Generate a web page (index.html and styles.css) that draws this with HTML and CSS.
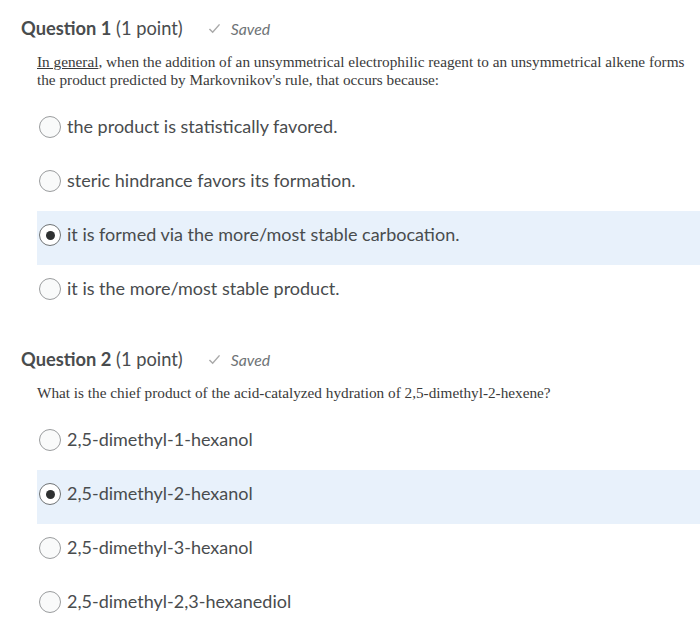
FILE: index.html
```html
<!DOCTYPE html>
<html>
<head>
<meta charset="utf-8">
<link rel="stylesheet" href="styles.css">
</head>
<body>
<div class="page">
  <section class="question q1">
    <div class="qhead">
      <span class="qtitle"><b>Question 1</b> (1 point)</span>
      <span class="saved"><svg class="check" viewBox="0 0 14 12" width="13" height="11"><path d="M1.5 6.5 L5 10 L12.5 1.5" fill="none" stroke="#a9a9a9" stroke-width="1.6"/></svg><i>Saved</i></span>
    </div>
    <p class="prompt"><span class="ul">In general</span>, when the addition of an unsymmetrical electrophilic reagent to an unsymmetrical alkene forms the product predicted by Markovnikov's rule, that occurs because:</p>
    <div class="options">
      <div class="opt"><span class="radio"></span><span class="label">the product is statistically favored.</span></div>
      <div class="opt"><span class="radio"></span><span class="label">steric hindrance favors its formation.</span></div>
      <div class="opt selected"><span class="radio"></span><span class="label">it is formed via the more/most stable carbocation.</span></div>
      <div class="opt"><span class="radio"></span><span class="label">it is the more/most stable product.</span></div>
    </div>
  </section>
  <section class="question q2">
    <div class="qhead">
      <span class="qtitle"><b>Question 2</b> (1 point)</span>
      <span class="saved"><svg class="check" viewBox="0 0 14 12" width="13" height="11"><path d="M1.5 6.5 L5 10 L12.5 1.5" fill="none" stroke="#a9a9a9" stroke-width="1.6"/></svg><i>Saved</i></span>
    </div>
    <p class="prompt">What is the chief product of the acid-catalyzed hydration of 2,5-dimethyl-2-hexene?</p>
    <div class="options">
      <div class="opt"><span class="radio"></span><span class="label">2,5-dimethyl-1-hexanol</span></div>
      <div class="opt selected"><span class="radio"></span><span class="label">2,5-dimethyl-2-hexanol</span></div>
      <div class="opt"><span class="radio"></span><span class="label">2,5-dimethyl-3-hexanol</span></div>
      <div class="opt"><span class="radio"></span><span class="label">2,5-dimethyl-2,3-hexanediol</span></div>
    </div>
  </section>
</div>
</body>
</html>
```

FILE: styles.css
```css
html, body {
  margin: 0;
  padding: 0;
  background: #ffffff;
}
.page {
  font-family: Lato, "Liberation Sans", sans-serif;
  color: #494c4e;
}
.question {
  display: flex;
  flex-direction: column;
}
.q1 {
  padding-top: 16px;
}
.q2 {
  padding-top: 28px;
}
.qhead {
  height: 24px;
  display: flex;
  align-items: center;
  padding-left: 21px;
  gap: 25px;
}
.qtitle {
  font-size: 18.3px;
  color: #494c4e;
}
.qtitle b {
  font-weight: 700;
}
.saved {
  display: flex;
  align-items: center;
  gap: 10px;
  font-size: 15.8px;
  color: #6e7376;
}
.check {
  display: block;
}
.prompt {
  margin: 13px 0 14px 0;
  padding-left: 37px;
  padding-right: 10px;
  font-family: "Liberation Serif", "Times New Roman", serif;
  font-size: 15.25px;
  line-height: 18px;
  color: #3a3a3a;
}
.ul {
  text-decoration: underline;
  text-decoration-thickness: 1px;
}
.options {
  margin-left: 37px;
  display: flex;
  flex-direction: column;
}
.opt {
  height: 54px;
  display: flex;
  align-items: flex-start;
  padding-top: 12px;
  box-sizing: border-box;
  padding-left: 2px;
}
.opt.selected {
  background: #e8f1fb;
}
.radio {
  width: 22px;
  height: 22px;
  margin-top: 1px;
  box-sizing: border-box;
  border: 1.5px solid #9a9c9e;
  border-radius: 50%;
  background: #f9fafa;
  flex: none;
  position: relative;
}
.opt.selected .radio {
  border-color: #6f7375;
  background: #ffffff;
}
.opt.selected .radio::after {
  content: "";
  position: absolute;
  left: 50%;
  top: 50%;
  width: 9px;
  height: 9px;
  margin: -4.5px 0 0 -4.5px;
  border-radius: 50%;
  background: #2f3132;
}
.label {
  margin-left: 6px;
  font-size: 18px;
  line-height: 22px;
  color: #494c4e;
}
```
